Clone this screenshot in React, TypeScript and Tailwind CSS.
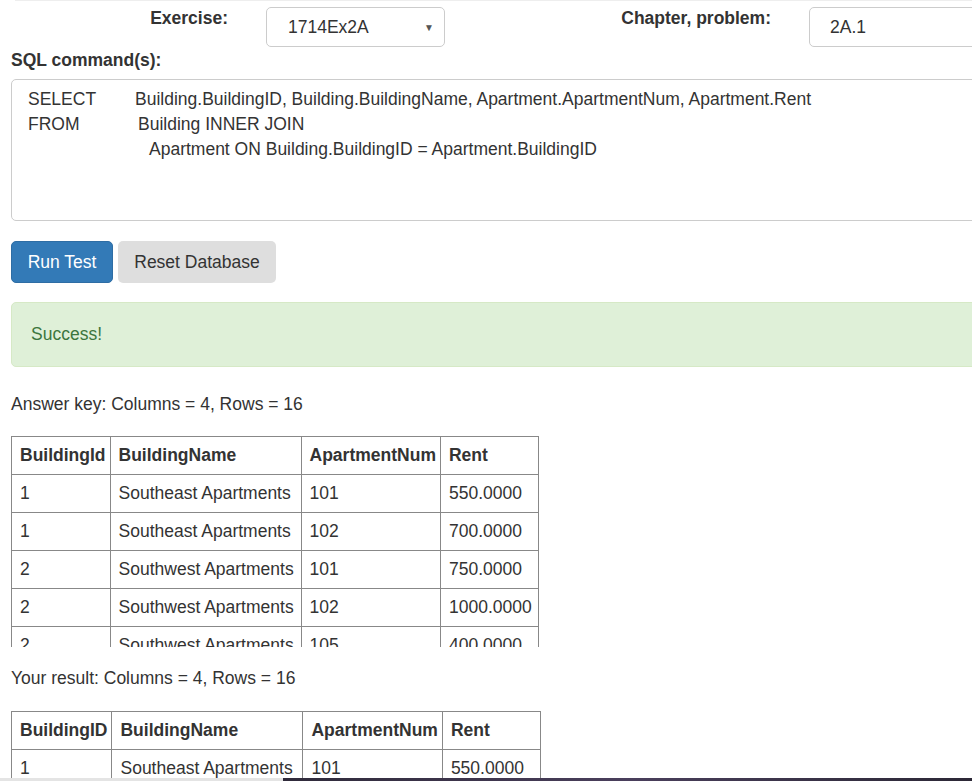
import React from "react";

type Row = [string, string, string, string];

const answerRows: Row[] = [
  ["1", "Southeast Apartments", "101", "550.0000"],
  ["1", "Southeast Apartments", "102", "700.0000"],
  ["2", "Southwest Apartments", "101", "750.0000"],
  ["2", "Southwest Apartments", "102", "1000.0000"],
  ["2", "Southwest Apartments", "105", "400.0000"],
  ["2", "Southwest Apartments", "106", "800.0000"],
];

const resultRows: Row[] = [
  ["1", "Southeast Apartments", "101", "550.0000"],
  ["1", "Southeast Apartments", "102", "700.0000"],
];

function ResultTable({ cols, rows, widths }: { cols: string[]; rows: Row[]; widths: string[] }) {
  return (
    <table className="border-collapse whitespace-nowrap text-[#333]">
      <thead>
        <tr>
          {cols.map((c, i) => (
            <th
              key={c}
              className={`${widths[i]} border border-[#888] py-[7px] pl-[8px] pr-[4px] text-left font-bold leading-[23px]`}
            >
              {c}
            </th>
          ))}
        </tr>
      </thead>
      <tbody>
        {rows.map((r, ri) => (
          <tr key={ri}>
            {r.map((v, i) => (
              <td key={i} className="border border-[#888] py-[7px] pl-[8px] pr-[4px] leading-[23px]">
                {v}
              </td>
            ))}
          </tr>
        ))}
      </tbody>
    </table>
  );
}

export default function App() {
  return (
    <div
      className="relative h-[781px] w-[972px] overflow-hidden bg-white text-[17.5px] text-[#333]"
      style={{ fontFamily: '"Liberation Sans", Arial, sans-serif' }}
    >
      <div className="ml-[15px] border-t border-[#eee]" />
      <div className="w-[1020px] pl-[11px]">
        {/* exercise / chapter row */}
        <div className="flex h-[46px] items-start">
          <div className="w-[217px] pt-[5px] text-right font-bold leading-[25px]">Exercise:</div>
          <div className="ml-[38px] mt-[6px] flex h-[40px] w-[179px] items-center justify-between rounded-[5px] border border-[#ccc] pl-[21px] pr-[10px]">
            <span>1714Ex2A</span>
            <span className="text-[10px] text-[#555]">▼</span>
          </div>
          <div className="w-[326px] pt-[5px] text-right font-bold leading-[25px]">Chapter, problem:</div>
          <div className="ml-[38px] mt-[6px] flex h-[40px] w-[200px] items-center rounded-[5px] border border-[#ccc] pl-[20px]">
            2A.1
          </div>
        </div>

        <div className="pt-[1px] font-bold leading-[25px]">SQL command(s):</div>

        <div className="mt-[6px] h-[142px] rounded-[5px] border border-[#ccc] pl-[16px] pt-[7px] leading-[25px]">
          <div>
            <span className="inline-block w-[107px]">SELECT</span>
            Building.BuildingID, Building.BuildingName, Apartment.ApartmentNum, Apartment.Rent
          </div>
          <div>
            <span className="inline-block w-[110px]">FROM</span>
            Building INNER JOIN
          </div>
          <div className="pl-[121px]">Apartment ON Building.BuildingID = Apartment.BuildingID</div>
        </div>

        <div className="mt-[20px] flex gap-[5px]">
          <button className="h-[42px] w-[102px] rounded-[5px] border border-[#2e6da4] bg-[#337ab7] text-white">
            Run Test
          </button>
          <button className="h-[42px] w-[158px] rounded-[5px] bg-[#dedede] text-[#333]">Reset Database</button>
        </div>

        <div className="mt-[19px] flex h-[65px] items-center rounded-[5px] border border-[#d6e9c6] bg-[#dff0d8] pl-[19px] text-[#3c763d]">
          Success!
        </div>

        <div className="mt-[25px] leading-[25px]">Answer key: Columns = 4, Rows = 16</div>

        <div className="mt-[19px] h-[211px] overflow-hidden">
          <ResultTable
            cols={["BuildingId", "BuildingName", "ApartmentNum", "Rent"]}
            rows={answerRows}
            widths={["w-[98px]", "w-[191px]", "w-[139px]", "w-[98px]"]}
          />
        </div>

        <div className="mt-[19px] leading-[25px]">Your result: Columns = 4, Rows = 16</div>

        <div className="mt-[20px]">
          <ResultTable
            cols={["BuildingID", "BuildingName", "ApartmentNum", "Rent"]}
            rows={resultRows}
            widths={["w-[99px]", "w-[191px]", "w-[139px]", "w-[98px]"]}
          />
        </div>
      </div>

      {/* taskbar edge over the bottom */}
      <div className="absolute bottom-0 left-0 flex h-[3px] w-full">
        <div className="w-[283px] bg-[#e4e4e4]" />
        <div className="flex-1 bg-gradient-to-r from-[#2f2a3a] via-[#4a3f5c] to-[#2c2836]" />
      </div>
    </div>
  );
}
